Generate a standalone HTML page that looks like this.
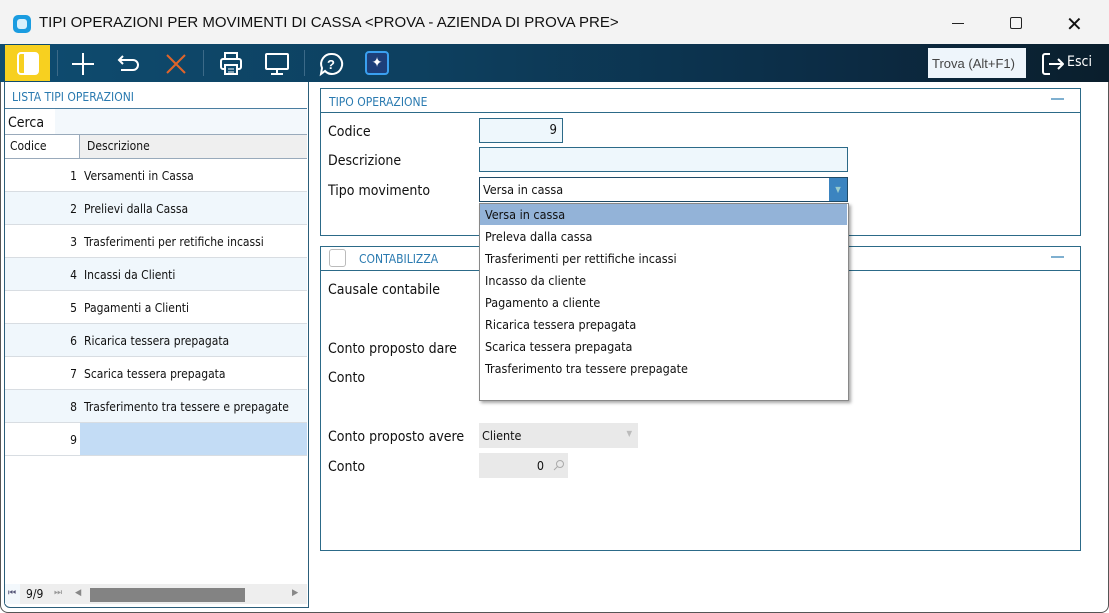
<!DOCTYPE html>
<html><head><meta charset="utf-8"><style>
*{box-sizing:border-box;margin:0;padding:0}
body{width:1109px;height:613px;background:#fff;font-family:"DejaVu Sans Condensed","Liberation Sans",sans-serif;font-size:12px;color:#111;position:relative;overflow:hidden}
.a{position:absolute}
.win{left:0;top:0;width:1109px;height:613px;border:1px solid #555;border-radius:8px;background:#fff;overflow:hidden}
.title{left:0;top:0;width:1109px;height:44px;background:#f3f3f3}
.tb{left:0;top:44px;width:1109px;height:38px;background:linear-gradient(90deg,#0e4c70,#0d3f5e 40%,#0c2c45 75%,#0a1e2c)}
.sep{width:1px;height:26px;top:50px;background:#3c6a88}
.row{left:5px;width:302px;height:33px;border-bottom:1px solid #d8dde2}
.row .n{position:absolute;left:0;width:72px;text-align:right;top:10px}
.row .d{position:absolute;left:79px;top:10px}
.lbl{left:328px;font-size:14px}
.opt{left:485px;font-size:12.5px}
</style></head><body>
<div class="a win"></div>
<div class="a title"></div>
<div class="a" style="left:13px;top:15px;width:18px;height:18px;background:#1a9ce0;border-radius:5px"><div style="position:absolute;left:4px;top:4px;width:10px;height:10px;background:#d8f0fc;border-radius:3px"></div></div>
<div class="a" style="left:39px;top:14px;font-size:15px;font-family:'Liberation Sans',sans-serif">TIPI OPERAZIONI PER MOVIMENTI DI CASSA &lt;PROVA - AZIENDA DI PROVA PRE&gt;</div>
<div class="a" style="left:952px;top:23px;width:12px;height:1px;background:#222"></div>
<div class="a" style="left:1010px;top:17px;width:12px;height:12px;border:1px solid #222;border-radius:2px"></div>
<div class="a" style="left:1066px;top:12px;font-size:20px;font-family:'Liberation Sans';font-weight:300">✕</div>
<div class="a tb"></div>
<div class="a" style="left:5px;top:45px;width:45px;height:36px;background:#f7d020"></div>
<div class="a" style="left:17px;top:52px;width:22px;height:23px;border:2px solid #fff;border-radius:4px;background:#f7d020"><div style="position:absolute;left:5px;top:0;width:13px;height:19px;background:#fff"></div></div>
<div class="a sep" style="left:57px"></div>
<svg class="a" style="left:70px;top:51px" width="26" height="26"><path d="M13 2v22M2 13h22" stroke="#fff" stroke-width="2"/></svg>
<svg class="a" style="left:116px;top:52px" width="26" height="24"><path d="M7 4L3 8l4 4M3 8h14a5 5 0 0 1 0 10H5" fill="none" stroke="#fff" stroke-width="2"/></svg>
<svg class="a" style="left:164px;top:52px" width="24" height="24"><path d="M3 3l18 18M21 3L3 21" stroke="#e0642a" stroke-width="2"/></svg>
<div class="a sep" style="left:203px"></div>
<svg class="a" style="left:218px;top:50px" width="26" height="28"><rect x="7" y="3" width="12" height="6" fill="none" stroke="#fff" stroke-width="2"/><rect x="3" y="9" width="20" height="10" rx="2" fill="none" stroke="#fff" stroke-width="2"/><rect x="7" y="15" width="12" height="9" fill="#0e4a6e" stroke="#fff" stroke-width="2"/><path d="M10 19h6M10 22h6" stroke="#fff"/></svg>
<svg class="a" style="left:263px;top:51px" width="28" height="26"><rect x="3" y="3" width="22" height="15" rx="1" fill="none" stroke="#fff" stroke-width="2"/><path d="M14 18v4M8 23h12" stroke="#fff" stroke-width="2"/></svg>
<div class="a sep" style="left:304px"></div>
<svg class="a" style="left:318px;top:51px" width="28" height="26"><path d="M14 3a10 10 0 1 1-7 17l-4 3 1-6A10 10 0 0 1 14 3z" fill="none" stroke="#fff" stroke-width="2"/><text x="9" y="18" fill="#fff" font-size="13" font-family="Liberation Sans" font-weight="bold">?</text></svg>
<div class="a" style="left:365px;top:51px;width:24px;height:24px;background:#1d3f7a;border:2px solid #3aa0f0;border-radius:4px;color:#fff;font-size:14px;text-align:center;line-height:20px">✦</div>
<div class="a" style="left:928px;top:48px;width:98px;height:30px;background:#eef5fb;font-family:'Liberation Sans';font-size:13px;color:#444;padding:8px 0 0 4px">Trova (Alt+F1)</div>
<svg class="a" style="left:1041px;top:52px" width="24" height="24"><path d="M9 2H4a2 2 0 0 0-2 2v16a2 2 0 0 0 2 2h5M8 12h14M17 7l5 5-5 5" fill="none" stroke="#fff" stroke-width="2" stroke-linejoin="round"/></svg>
<div class="a" style="left:1067px;top:54px;color:#fff;font-size:14px">Esci</div>

<div class="a" style="left:4px;top:82px;width:305px;height:526px;border:1px solid #2c5e7a;border-top:none;border-radius:0 0 0 6px"></div>
<div class="a" style="left:12px;top:90px;color:#2a7ab0;font-size:12px">LISTA TIPI OPERAZIONI</div>
<div class="a" style="left:5px;top:108px;width:302px;height:1px;background:#4a7da0"></div>
<div class="a" style="left:55px;top:109px;width:252px;height:25px;background:#f3f8fc"></div>
<div class="a" style="left:8px;top:115px;font-size:14px">Cerca</div>
<div class="a" style="left:5px;top:134px;width:302px;height:25px;background:#efefef;border-top:1px solid #9ab;border-bottom:1px solid #9ab"></div>
<div class="a" style="left:5px;top:135px;width:75px;height:23px;background:#fff;border-right:1px solid #9ab"></div>
<div class="a" style="left:10px;top:139px">Codice</div>
<div class="a" style="left:87px;top:139px">Descrizione</div>
<div class="a row" style="top:159px"><span class="n">1</span><span class="d">Versamenti in Cassa</span></div>
<div class="a row" style="top:192px;background:#f0f7fc"><span class="n">2</span><span class="d">Prelievi dalla Cassa</span></div>
<div class="a row" style="top:225px"><span class="n">3</span><span class="d">Trasferimenti per retifiche incassi</span></div>
<div class="a row" style="top:258px;background:#f0f7fc"><span class="n">4</span><span class="d">Incassi da Clienti</span></div>
<div class="a row" style="top:291px"><span class="n">5</span><span class="d">Pagamenti a Clienti</span></div>
<div class="a row" style="top:324px;background:#f0f7fc"><span class="n">6</span><span class="d">Ricarica tessera prepagata</span></div>
<div class="a row" style="top:357px"><span class="n">7</span><span class="d">Scarica tessera prepagata</span></div>
<div class="a row" style="top:390px;background:#f0f7fc"><span class="n">8</span><span class="d">Trasferimento tra tessere e prepagate</span></div>
<div class="a row" style="top:423px"><span class="n">9</span><div style="position:absolute;left:75px;top:0;width:227px;height:32px;background:#c3dcf5"></div></div>
<div class="a" style="left:5px;top:584px;width:302px;height:20px;background:#eee"></div>
<div class="a" style="left:5px;top:584px;width:15px;height:20px;background:#f3f8fc"></div>
<div class="a" style="left:8px;top:588px;font-size:9px;color:#557">⏮</div>
<div class="a" style="left:26px;top:587px">9/9</div>
<div class="a" style="left:54px;top:588px;font-size:9px;color:#999">⏭</div>
<div class="a" style="left:75px;top:588px;font-size:9px;color:#888">◀</div>
<div class="a" style="left:90px;top:588px;width:155px;height:14px;background:#838383"></div>
<div class="a" style="left:292px;top:588px;font-size:9px;color:#888">▶</div>

<div class="a" style="left:320px;top:88px;width:761px;height:148px;border:1px solid #2c6a88"></div>
<div class="a" style="left:320px;top:112px;width:761px;height:1px;background:#2c6a88"></div>
<div class="a" style="left:329px;top:95px;color:#2a7ab0">TIPO OPERAZIONE</div>
<div class="a" style="left:1051px;top:98px;width:13px;height:2px;background:#7fb0d0"></div>
<div class="a lbl" style="top:124px">Codice</div>
<div class="a" style="left:479px;top:118px;width:84px;height:25px;background:#eef7fc;border:1px solid #2c6a88;text-align:right;padding:4px 5px 0 0;font-size:13px">9</div>
<div class="a lbl" style="top:153px">Descrizione</div>
<div class="a" style="left:479px;top:147px;width:369px;height:25px;background:#eef7fc;border:1px solid #2c6a88"></div>
<div class="a lbl" style="top:183px">Tipo movimento</div>
<div class="a" style="left:479px;top:177px;width:369px;height:25px;background:#fff;border:1px solid #1f4a66;padding:4px 0 0 3px;font-size:12.5px">Versa in cassa</div>
<div class="a" style="left:829px;top:178px;width:18px;height:23px;background:#3b84c0;color:#9cc;font-size:8px;text-align:center;line-height:23px">▼</div>

<div class="a" style="left:320px;top:246px;width:761px;height:305px;border:1px solid #2c6a88"></div>
<div class="a" style="left:320px;top:270px;width:761px;height:1px;background:#2c6a88"></div>
<div class="a" style="left:329px;top:249px;width:17px;height:18px;border:1px solid #bbb;border-radius:3px"></div>
<div class="a" style="left:359px;top:252px;color:#2a7ab0">CONTABILIZZA</div>
<div class="a" style="left:1051px;top:256px;width:13px;height:2px;background:#7fb0d0"></div>
<div class="a lbl" style="top:282px">Causale contabile</div>
<div class="a lbl" style="top:341px">Conto proposto dare</div>
<div class="a lbl" style="top:370px">Conto</div>
<div class="a lbl" style="top:429px">Conto proposto avere</div>
<div class="a" style="left:479px;top:423px;width:159px;height:25px;background:#e9e9e9;padding:5px 0 0 3px;font-size:12.5px">Cliente<span style="position:absolute;right:6px;top:6px;font-size:8px;color:#bbb">▼</span></div>
<div class="a lbl" style="top:459px">Conto</div>
<div class="a" style="left:479px;top:453px;width:89px;height:25px;background:#e9e9e9;padding:5px 24px 0 0;text-align:right;font-size:12.5px">0</div>
<svg class="a" style="left:553px;top:459px" width="12" height="12"><circle cx="7" cy="5" r="3.5" fill="none" stroke="#aaa"/><path d="M4.5 7.5L1 11" stroke="#aaa"/></svg>

<div class="a" style="left:479px;top:203px;width:370px;height:198px;background:#fff;border:1px solid #888;box-shadow:2px 2px 3px rgba(0,0,0,.35)"></div>
<div class="a" style="left:480px;top:204px;width:367px;height:21px;background:#93b3d8"></div>
<div class="a opt" style="top:207px">Versa in cassa</div>
<div class="a opt" style="top:229px">Preleva dalla cassa</div>
<div class="a opt" style="top:251px">Trasferimenti per rettifiche incassi</div>
<div class="a opt" style="top:273px">Incasso da cliente</div>
<div class="a opt" style="top:295px">Pagamento a cliente</div>
<div class="a opt" style="top:317px">Ricarica tessera prepagata</div>
<div class="a opt" style="top:339px">Scarica tessera prepagata</div>
<div class="a opt" style="top:361px">Trasferimento tra tessere prepagate</div>
</body></html>
